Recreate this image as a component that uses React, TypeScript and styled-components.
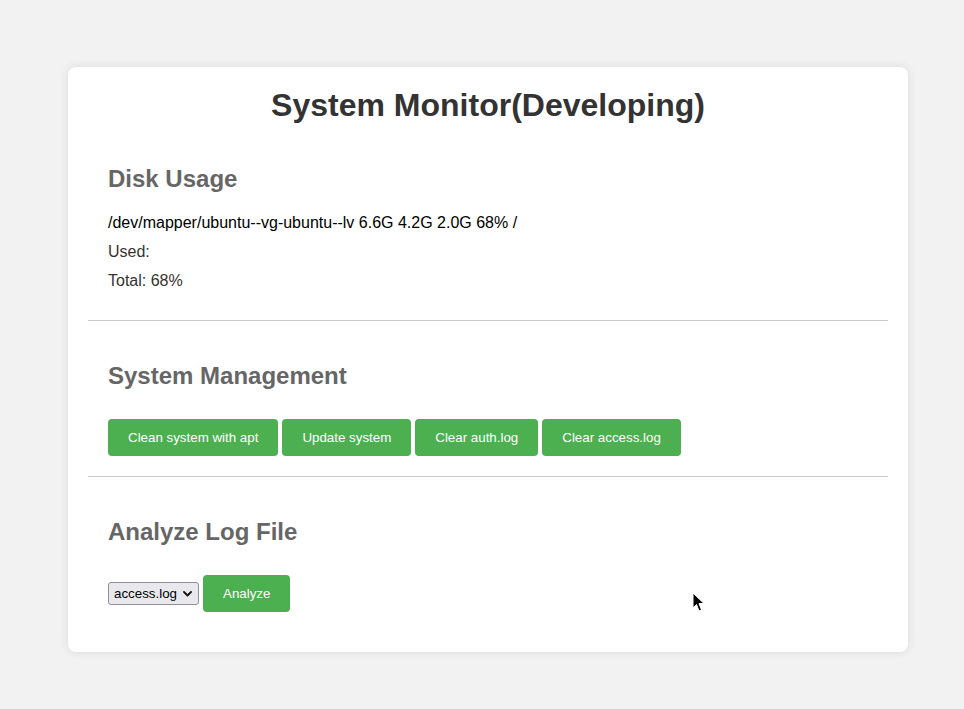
import React from "react";
import styled, { createGlobalStyle } from "styled-components";

const GlobalStyle = createGlobalStyle`
  html, body {
    margin: 0;
    padding: 0;
    background: #f2f2f2;
    font-family: "Liberation Sans", Arial, sans-serif;
  }
`;

const Page = styled.div`
  position: relative;
  min-height: 709px;
  padding: 67px 0 0 68px;
  box-sizing: border-box;
`;

const Card = styled.main`
  width: 840px;
  box-sizing: border-box;
  padding: 20px;
  background: #ffffff;
  border-radius: 8px;
  box-shadow: 0 0 10px rgba(0, 0, 0, 0.1);
`;

const Title = styled.h1`
  margin: 0;
  line-height: 37px;
  text-align: center;
  font-size: 32px;
  font-weight: bold;
  color: #333333;
`;

const Section = styled.section<{ $last?: boolean }>`
  padding: 20px;
  border-bottom: ${(p) => (p.$last ? "none" : "1px solid #cccccc")};
`;

const Heading = styled.h2`
  margin: 20px 0;
  font-size: 24px;
  line-height: 29px;
  font-weight: bold;
  color: #666666;
`;

const Line = styled.p<{ $strong?: boolean }>`
  margin: 10px 0;
  font-size: 16px;
  line-height: 19px;
  color: ${(p) => (p.$strong ? "#000000" : "#333333")};
`;

const ButtonRow = styled.div`
  display: flex;
  align-items: center;
  gap: 4px;
  margin-top: 29px;
`;

const Button = styled.button`
  height: 37px;
  padding: 0 20px;
  border: none;
  border-radius: 4px;
  background: #4caf50;
  color: #ffffff;
  font-family: "Liberation Sans", Arial, sans-serif;
  font-size: 13.333px;
  cursor: pointer;
`;

const SelectWrap = styled.div`
  position: relative;
  display: flex;
`;

const Select = styled.select`
  appearance: none;
  width: 91px;
  height: 23px;
  box-sizing: border-box;
  padding: 0 20px 0 5px;
  border: 1px solid #8f8f9d;
  border-radius: 3px;
  background: #e9e9ed;
  font-family: "Liberation Sans", Arial, sans-serif;
  font-size: 13.333px;
  color: #000;
`;

const Chevron = styled.svg`
  position: absolute;
  right: 7px;
  top: 9px;
  pointer-events: none;
`;

const Cursor = styled.svg`
  position: absolute;
  left: 692px;
  top: 592px;
  pointer-events: none;
`;

export default function App() {
  return (
    <>
      <GlobalStyle />
      <Page>
        <Card>
          <Title>System Monitor(Developing)</Title>
          <Section>
            <Heading>Disk Usage</Heading>
            <Line $strong>/dev/mapper/ubuntu--vg-ubuntu--lv 6.6G 4.2G 2.0G 68% /</Line>
            <Line>Used: </Line>
            <Line>Total: 68%</Line>
          </Section>
          <Section>
            <Heading>System Management</Heading>
            <ButtonRow>
              <Button>Clean system with apt</Button>
              <Button>Update system</Button>
              <Button>Clear auth.log</Button>
              <Button>Clear access.log</Button>
            </ButtonRow>
          </Section>
          <Section $last>
            <Heading>Analyze Log File</Heading>
            <ButtonRow>
              <SelectWrap>
                <Select defaultValue="access.log">
                  <option value="access.log">access.log</option>
                  <option value="auth.log">auth.log</option>
                </Select>
                <Chevron width="9" height="6" viewBox="0 0 9 6">
                  <path
                    d="M1 1 L4.5 4.5 L8 1"
                    fill="none"
                    stroke="#111"
                    strokeWidth="1.8"
                    strokeLinecap="round"
                    strokeLinejoin="round"
                  />
                </Chevron>
              </SelectWrap>
              <Button>Analyze</Button>
            </ButtonRow>
          </Section>
        </Card>
        <Cursor width="14" height="22" viewBox="0 0 14 22">
          <path
            d="M1 1 L1 16 L4.5 12.5 L7 19 L9.5 18 L7 11.5 L12 11.5 Z"
            fill="#000"
            stroke="#fff"
            strokeWidth="1"
          />
        </Cursor>
      </Page>
    </>
  );
}
